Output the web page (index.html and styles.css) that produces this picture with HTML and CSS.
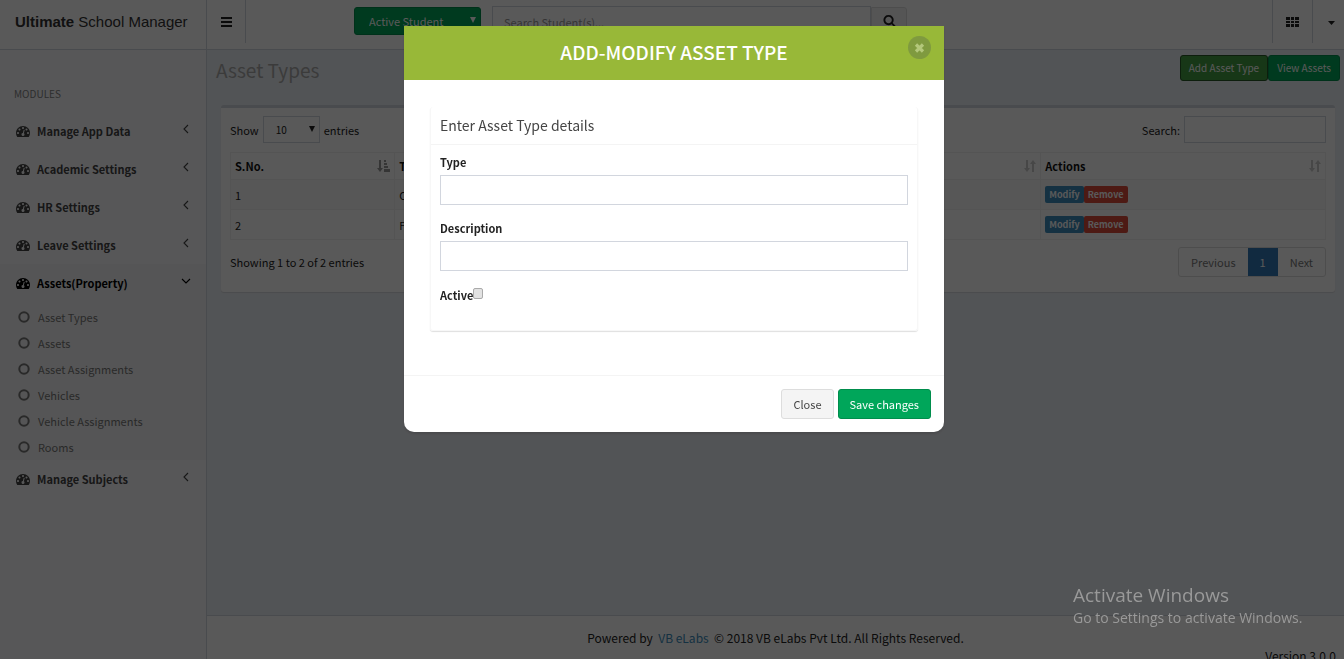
FILE: index.html
```
<!DOCTYPE html>
<html lang="en">
<head>
    <meta charset="UTF-8">
    <meta name="viewport" content="width=device-width, initial-scale=1.0">
    <title>Ultimate School Manager - Asset Types</title>
    <link rel="stylesheet" href="styles.css">
</head>
<body>
    <!-- Shared icons -->
    <svg class="sprite" aria-hidden="true">
        <symbol id="dashboard" viewBox="0 0 1792 1792"><path d="M384 1152q0-53-37.5-90.5t-90.5-37.5-90.5 37.5-37.5 90.5 37.5 90.5 90.5 37.5 90.5-37.5 37.5-90.5zm192-448q0-53-37.5-90.5t-90.5-37.5-90.5 37.5-37.5 90.5 37.5 90.5 90.5 37.5 90.5-37.5 37.5-90.5zm428 481l101-382q6-26-7.5-48.5t-38.5-29.5-48 6.5-30 39.5l-101 382q-60 5-107 43.5t-63 98.5q-20 77 20 146t117 89 146-20 89-117q16-60-6-117t-72-91zm660-33q0-53-37.5-90.5t-90.5-37.5-90.5 37.5-37.5 90.5 37.5 90.5 90.5 37.5 90.5-37.5 37.5-90.5zm-640-640q0-53-37.5-90.5t-90.5-37.5-90.5 37.5-37.5 90.5 37.5 90.5 90.5 37.5 90.5-37.5 37.5-90.5zm448 192q0-53-37.5-90.5t-90.5-37.5-90.5 37.5-37.5 90.5 37.5 90.5 90.5 37.5 90.5-37.5 37.5-90.5zm320 448q0 261-141 483-19 29-54 29h-1402q-35 0-54-29-141-221-141-483 0-182 71-348t191-286 286-191 348-71 348 71 286 191 191 286 71 348z"/></symbol>
        <symbol id="search" viewBox="0 0 1792 1792"><path d="M1216 832q0-185-131.5-316.5t-316.5-131.5-316.5 131.5-131.5 316.5 131.5 316.5 316.5 131.5 316.5-131.5 131.5-316.5zm512 832q0 52-38 90t-90 38q-54 0-90-38l-343-342q-179 124-399 124-143 0-273.5-55.5t-225-150-150-225-55.5-273.5 55.5-273.5 150-225 225-150 273.5-55.5 273.5 55.5 225 150 150 225 55.5 273.5q0 220-124 399l343 343q37 37 37 90z"/></symbol>
        <symbol id="angle" viewBox="0 0 8 12"><path d="M6 2L2 6l4 4" fill="none" stroke="currentColor" stroke-width="1.1"/></symbol>
        <symbol id="circle" viewBox="0 0 12 12"><circle cx="6" cy="6" r="4.7" fill="none" stroke="currentColor" stroke-width="2"/></symbol>
        <symbol id="sort" viewBox="0 0 12 12"><path d="M2 0h2v8h2l-3 4-3-4h2zM8 12V4H6l3-4 3 4h-2v8z"/></symbol>
        <symbol id="sort-asc" viewBox="0 0 13 12"><path d="M2 0h2v8h2l-3 4-3-4h2zM7 0h2v2H7zM7 3h3v2H7zM7 6h4v2H7zM7 9h6v3H7z"/></symbol>
    </svg>

    <!-- Top bar -->
    <header class="main-header">
        <a href="#" class="logo"><b>Ultimate</b> School Manager</a>
        <nav class="navbar">
            <button class="nav-button nav-toggle" aria-label="Toggle navigation">
                <svg width="11" height="10" viewBox="0 0 11 10"><path d="M0 0h11v2H0zM0 4h11v2H0zM0 8h11v2H0z"/></svg>
            </button>
            <div class="select-wrap student-select">
                <select aria-label="Student status">
                    <option>Active Student</option>
                </select>
            </div>
            <form class="student-search">
                <input type="text" placeholder="Search Student(s)..." aria-label="Search students">
                <button type="button" aria-label="Search"><svg width="13" height="13"><use href="#search"/></svg></button>
            </form>
            <div class="navbar-right">
                <button class="nav-button" aria-label="Apps">
                    <svg width="13" height="10" viewBox="0 0 13 10"><path d="M0 0h4v3H0zM5 0h3v3H5zM9 0h4v3H9zM0 4h4v2H0zM5 4h3v2H5zM9 4h4v2H9zM0 7h4v3H0zM5 7h3v3H5zM9 7h4v3H9z"/></svg>
                </button>
                <button class="nav-button nav-account" aria-label="Account">
                    <svg width="7" height="4" viewBox="0 0 7 4"><path d="M0 0h7L3.500 4z"/></svg>
                </button>
            </div>
        </nav>
    </header>

    <div class="wrapper">
        <!-- Sidebar -->
        <aside class="sidebar">
            <div class="sidebar-header">MODULES</div>
            <ul class="sidebar-menu">
                <li><a href="#"><svg class="dash"><use href="#dashboard"/></svg>Manage App Data<svg class="angle"><use href="#angle"/></svg></a></li>
                <li><a href="#"><svg class="dash"><use href="#dashboard"/></svg>Academic Settings<svg class="angle"><use href="#angle"/></svg></a></li>
                <li><a href="#"><svg class="dash"><use href="#dashboard"/></svg>HR Settings<svg class="angle"><use href="#angle"/></svg></a></li>
                <li><a href="#"><svg class="dash"><use href="#dashboard"/></svg>Leave Settings<svg class="angle"><use href="#angle"/></svg></a></li>
                <li class="active">
                    <a href="#"><svg class="dash"><use href="#dashboard"/></svg>Assets(Property)<svg class="angle"><use href="#angle"/></svg></a>
                    <ul class="submenu">
                        <li><a href="#"><svg><use href="#circle"/></svg>Asset Types</a></li>
                        <li><a href="#"><svg><use href="#circle"/></svg>Assets</a></li>
                        <li><a href="#"><svg><use href="#circle"/></svg>Asset Assignments</a></li>
                        <li><a href="#"><svg><use href="#circle"/></svg>Vehicles</a></li>
                        <li><a href="#"><svg><use href="#circle"/></svg>Vehicle Assignments</a></li>
                        <li><a href="#"><svg><use href="#circle"/></svg>Rooms</a></li>
                    </ul>
                </li>
                <li><a href="#"><svg class="dash"><use href="#dashboard"/></svg>Manage Subjects<svg class="angle"><use href="#angle"/></svg></a></li>
            </ul>
        </aside>

        <div class="page">
            <main class="content">
                <div class="content-header">
                    <h1>Asset Types</h1>
                    <div class="header-buttons">
                        <button class="btn-add">Add Asset Type</button>
                        <button class="btn-view">View Assets</button>
                    </div>
                </div>

                <div class="box">
                    <div class="table-tools">
                        <div class="table-length">
                            <label for="length">Show</label>
                            <div class="select-wrap">
                                <select id="length">
                                    <option>10</option>
                                </select>
                            </div>
                            <span>entries</span>
                        </div>
                        <div class="table-filter">
                            <label for="filter">Search:</label>
                            <input type="search" id="filter">
                        </div>
                    </div>

                    <table>
                        <thead>
                            <tr>
                                <th class="col-no"><div>S.No.<svg class="sorted"><use href="#sort-asc"/></svg></div></th>
                                <th><div>Type<svg><use href="#sort"/></svg></div></th>
                                <th><div>Description<svg><use href="#sort"/></svg></div></th>
                                <th class="col-actions"><div>Actions<svg><use href="#sort"/></svg></div></th>
                            </tr>
                        </thead>
                        <tbody>
                            <tr>
                                <td>1</td>
                                <td>Current</td>
                                <td></td>
                                <td><div class="actions"><button class="modify">Modify</button><button class="remove">Remove</button></div></td>
                            </tr>
                            <tr>
                                <td>2</td>
                                <td>Fixed</td>
                                <td></td>
                                <td><div class="actions"><button class="modify">Modify</button><button class="remove">Remove</button></div></td>
                            </tr>
                        </tbody>
                    </table>

                    <div class="table-bottom">
                        <span>Showing 1 to 2 of 2 entries</span>
                        <nav class="pagination" aria-label="Pages">
                            <a href="#">Previous</a>
                            <a href="#" class="current">1</a>
                            <a href="#">Next</a>
                        </nav>
                    </div>
                </div>
            </main>

            <footer class="main-footer">
                <p>Powered by&nbsp; <a href="#">VB eLabs</a>&nbsp; © 2018 VB eLabs Pvt Ltd. All Rights Reserved.</p>
                <div class="version">Version 3.0.0</div>
            </footer>
        </div>
    </div>

    <!-- Add / modify dialog -->
    <div class="overlay">
        <div class="modal" role="dialog" aria-labelledby="modalTitle">
            <div class="modal-header">
                <h2 id="modalTitle">ADD-MODIFY ASSET TYPE</h2>
                <button class="modal-close" aria-label="Close dialog">
                    <svg width="11" height="10" viewBox="0 0 11 10"><path d="M2 1.500l7 7M9 1.500l-7 7" stroke="currentColor" stroke-width="3.200"/></svg>
                </button>
            </div>
            <form class="modal-body">
                <div class="panel">
                    <h3>Enter Asset Type details</h3>
                    <div class="panel-body">
                        <label for="type">Type</label>
                        <input type="text" id="type">
                        <label for="description">Description</label>
                        <input type="text" id="description">
                        <div class="check-row">
                            <label for="active">Active</label>
                            <input type="checkbox" id="active">
                        </div>
                    </div>
                </div>
            </form>
            <div class="modal-footer">
                <button class="btn-close">Close</button>
                <button class="btn-save">Save changes</button>
            </div>
        </div>
    </div>

    <div class="watermark">
        <div class="watermark-title">Activate Windows</div>
        <div>Go to Settings to activate Windows.</div>
    </div>
</body>
</html>
```
FILE: styles.css
```
* {
    box-sizing: border-box;
}

body {
    margin: 0;
    height: 100vh;
    overflow: hidden;
    font-family: 'Noto Sans CJK SC', 'Noto Sans', sans-serif;
    font-size: 11px;
    line-height: 18px;
    color: #222;
    background-color: #fff;
}

button, input, select {
    font: inherit;
    color: inherit;
    margin: 0;
    border-radius: 0;
}

button {
    cursor: pointer;
}

a {
    color: #3c8dbc;
    text-decoration: none;
}

ul {
    list-style: none;
    margin: 0;
    padding: 0;
}

svg {
    fill: currentColor;
    flex: none;
}

.sprite {
    position: absolute;
    width: 0;
    height: 0;
}

/* Top bar */
.main-header {
    display: flex;
    height: 50px;
    border-bottom: 1px solid #d2d6de;
}

.logo {
    width: 207px;
    padding-left: 15px;
    border-right: 1px solid #d2d6de;
    font-family: 'Liberation Sans', Arial, sans-serif;
    font-size: 15px;
    line-height: 44px;
    white-space: nowrap;
    color: #333;
}

.navbar {
    flex: 1;
    display: flex;
    align-items: flex-start;
}

.nav-button {
    display: flex;
    align-items: center;
    justify-content: center;
    width: 40px;
    height: 43px;
    padding: 0;
    border: 0;
    border-left: 1px solid #d2d6de;
    background: none;
    color: #222;
}

.nav-toggle {
    width: 39px;
    border-left: 0;
    border-right: 1px solid #d2d6de;
}

.navbar-right {
    display: flex;
    margin-left: auto;
}

.nav-account {
    width: 32px;
    padding: 2px 0 0 6px;
}

.select-wrap {
    position: relative;
}

.select-wrap select {
    width: 100%;
    height: 100%;
    appearance: none;
    border: 1px solid #d2d6de;
    background: none;
    padding: 0 12px;
}

.select-wrap::after {
    content: "";
    position: absolute;
    right: 5px;
    top: 10px;
    border: 3px solid transparent;
    border-top: 6px solid currentColor;
    border-bottom: 0;
    pointer-events: none;
}

.student-select {
    width: 127px;
    height: 28px;
    margin: 7px 11px 0 108px;
    color: #fff;
}

.student-select select {
    padding: 0 14px;
    border-color: #008d4c;
    border-radius: 3px;
    background-color: #00a65a;
}

.student-search {
    display: flex;
    flex: 0 1 415px;
    margin-top: 6px;
}

.student-search input {
    flex: 1;
    height: 31px;
    padding: 0 11px;
    border: 1px solid #d2d6de;
    background: none;
}

.student-search input::placeholder {
    color: #999;
}

.student-search button {
    display: flex;
    align-items: center;
    justify-content: center;
    width: 36px;
    height: 29px;
    margin-top: 1px;
    padding: 0 0 2px;
    border: 1px solid #ddd;
    border-radius: 0 3px 3px 0;
    background-color: #f4f4f4;
}

/* Sidebar */
.wrapper {
    display: flex;
}

.sidebar {
    width: 207px;
    min-height: calc(100vh - 50px);
    border-right: 1px solid #d2d6de;
    background-color: #f9fafc;
}

.sidebar-header {
    padding: 35px 14px 9px;
    font-size: 10px;
    color: #848484;
}

.sidebar-menu a {
    display: flex;
    align-items: center;
    height: 38px;
    padding: 0 16px;
    font-weight: bold;
    color: #444;
}

.dash {
    width: 14px;
    height: 14px;
    margin-right: 7px;
}

.angle {
    width: 8px;
    height: 12px;
    margin-left: auto;
    margin-bottom: 4px;
}

.active {
    background-color: #f4f4f5;
}

.sidebar-menu .active > a {
    color: #000;
}

.active .angle {
    transform: rotate(-90deg);
}

.submenu {
    padding-top: 2px;
}

.sidebar-menu .submenu a {
    height: 26px;
    padding-left: 18px;
    font-weight: normal;
    color: #777;
}

.submenu svg {
    width: 12px;
    height: 12px;
    margin-right: 8px;
}

/* Page content */
.page {
    flex: 1;
}

.content {
    min-height: calc(100vh - 94px);
    padding: 5px 4px 0 9px;
    background-color: #ecf0f5;
}

.content-header {
    display: flex;
    justify-content: space-between;
}

.content-header h1 {
    margin: 0;
    font-size: 19px;
    line-height: 30px;
    font-weight: normal;
    color: #aaa;
}

.header-buttons button {
    float: left;
    height: 26px;
    padding: 0 8px;
    border: 1px solid #008d4c;
    border-radius: 3px;
    font-size: 10px;
    color: #fff;
    background-color: #00a65a;
}

.header-buttons .btn-add {
    border-color: #255625;
    background-color: #449d44;
}

.box {
    margin: 20px 5px 0;
    padding: 8px 9px 15px;
    border-top: 3px solid #d2d6de;
    border-radius: 3px;
    background-color: #fff;
    box-shadow: 0 1px 1px rgba(0, 0, 0, 0.1);
}

.table-tools, .table-length, .table-filter, .table-bottom {
    display: flex;
    align-items: center;
}

.table-tools, .table-bottom {
    justify-content: space-between;
}

.table-length, .table-filter {
    gap: 4px;
}

.table-length .select-wrap {
    width: 57px;
    height: 27px;
}

.table-length select {
    font-size: 10px;
}

.table-filter input {
    width: 142px;
    height: 27px;
    border: 1px solid #d2d6de;
    background: none;
}

table {
    width: 100%;
    margin: 9px 0 7px;
    table-layout: fixed;
    border-collapse: collapse;
}

th, td {
    height: 30px;
    padding: 0 4px;
    border: 1px solid #f0f0f0;
    text-align: left;
}

th {
    height: 27px;
    color: #111;
}

th div {
    display: flex;
    align-items: center;
    justify-content: space-between;
}

th svg {
    width: 12px;
    height: 12px;
    color: #ccc;
}

th .sorted {
    width: 13px;
    color: #999;
}

tbody tr:nth-child(odd) {
    background-color: #f9f9f9;
}

.col-no {
    width: 15%;
}

.col-actions {
    width: 26%;
}

.actions {
    display: flex;
}

.actions button {
    height: 17px;
    padding: 0 4px;
    border: 0;
    border-radius: 2px;
    font-size: 9px;
    line-height: 16px;
    font-weight: bold;
    color: #fff;
}

.actions .modify {
    background-color: #3c8dbc;
}

.actions .remove {
    background-color: #dd4b39;
}

.pagination {
    display: flex;
    border: 1px solid #ddd;
    border-radius: 3px;
}

.pagination a {
    padding: 5px 12px;
    color: #777;
}

.pagination .current {
    color: #fff;
    background-color: #337ab7;
}

.main-footer {
    padding: 13px 8px 0;
    border-top: 1px solid #d2d6de;
    background-color: #fff;
    font-size: 12px;
}

.main-footer p {
    margin: 0;
    text-align: center;
}

.version {
    text-align: right;
}

/* Modal */
.overlay {
    position: fixed;
    inset: 0;
    padding: 26px 0 0 4px;
    background-color: rgba(0, 0, 0, 0.65);
}

.modal {
    max-width: 540px;
    margin: 0 auto;
    border-radius: 0 0 10px 10px;
    background-color: #fff;
    box-shadow: 0 2px 3px rgba(0, 0, 0, 0.13);
}

.modal-header {
    position: relative;
    padding: 11px 0 13px;
    background-color: #98b838;
    color: #fff;
}

.modal-header h2 {
    margin: 0;
    font-size: 19px;
    line-height: 30px;
    font-weight: 500;
    text-align: center;
}

.modal-close {
    position: absolute;
    top: 10px;
    right: 13px;
    display: flex;
    align-items: center;
    justify-content: center;
    width: 23px;
    height: 23px;
    padding: 0;
    border: 0;
    border-radius: 50%;
    background-color: #7f9a3f;
    color: #b3c77b;
}

.modal-body {
    padding: 27px 26px 44px;
}

.panel {
    border-radius: 3px;
    box-shadow: 0 1px 1px rgba(0, 0, 0, 0.13);
    border: 1px solid #f7f7f7;
    border-top: 0;
}

.panel h3 {
    margin: 0;
    padding: 9px;
    border-bottom: 1px solid #f4f4f4;
    font-size: 14px;
    line-height: 19px;
    font-weight: normal;
    color: #444;
}

.panel-body {
    padding: 8px 9px 22px;
}

.panel label {
    display: block;
    margin-bottom: 4px;
    font-weight: bold;
}

.panel input[type="text"] {
    width: 100%;
    height: 30px;
    margin-bottom: 14px;
    padding: 0 10px;
    border: 1px solid #d2d6de;
}

.check-row {
    display: flex;
    align-items: flex-start;
    padding-top: 1px;
}

.check-row input {
    appearance: none;
    width: 10px;
    height: 11px;
    margin-top: 2px;
    border: 1px solid #aaa;
    border-radius: 2px;
    background-color: #e2e2e2;
}

.modal-footer {
    display: flex;
    justify-content: flex-end;
    gap: 4px;
    padding: 13px;
    border-top: 1px solid #f4f4f4;
}

.modal-footer button {
    height: 30px;
    padding: 0 11px;
    border: 1px solid #ddd;
    border-radius: 3px;
    background-color: #f4f4f4;
    color: #444;
}

.modal-footer .btn-save {
    border-color: #008d4c;
    background-color: #00a65a;
    color: #fff;
}

/* Activation notice over everything */
.watermark {
    position: fixed;
    right: 35px;
    bottom: 31px;
    width: 236px;
    font-family: 'Open Sans', sans-serif;
    font-size: 14px;
    line-height: 20px;
    color: #999;
    pointer-events: none;
}

.watermark-title {
    font-size: 19px;
    line-height: 26px;
}
```
